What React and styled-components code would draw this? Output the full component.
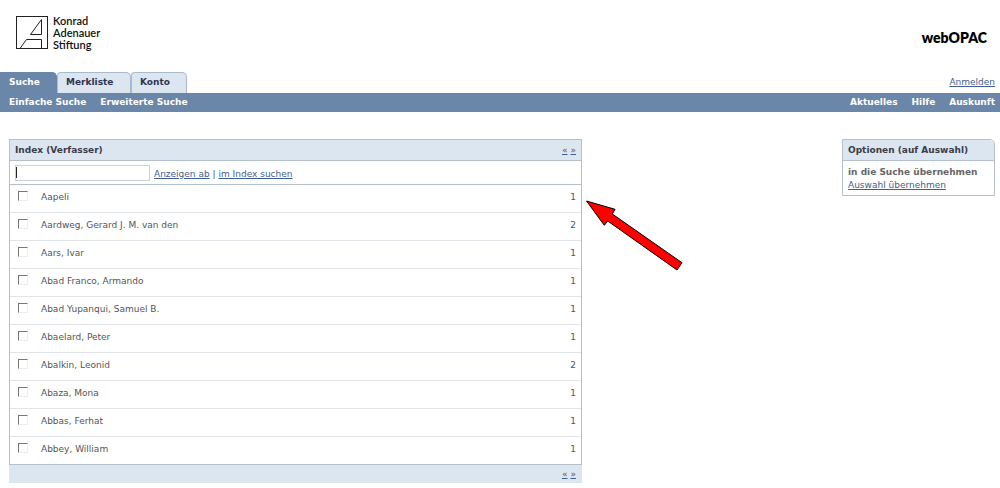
import React, { useState } from 'react';
import styled, { createGlobalStyle } from 'styled-components';

const GlobalStyle = createGlobalStyle`
  * {
    box-sizing: border-box;
  }

  body {
    margin: 0;
    background: #fff;
    color: #555;
    font-family: Verdana, "DejaVu Sans", sans-serif;
    font-size: 9px;
    line-height: 13px;
  }
`;

const Page = styled.div`
  position: relative;
`;

const Header = styled.header`
  display: flex;
  justify-content: space-between;
  align-items: flex-start;
  height: 72px;
  padding: 15px 13px 0 15px;
`;

const Brand = styled.div`
  display: flex;
  gap: 4px;
`;

const BrandName = styled.div`
  color: #111;
  font-family: Lato, "Open Sans", sans-serif;
  font-size: 11px;
  font-weight: 600;
  line-height: 12px;
`;

const ProductName = styled.div`
  padding-top: 13px;
  color: #000;
  font-family: Lato, "Open Sans", sans-serif;
  font-size: 14px;
  font-weight: 800;
  line-height: 20px;
`;

const TabBar = styled.div`
  display: flex;
  justify-content: space-between;
  align-items: flex-end;
  padding-right: 5px;
`;

const Tabs = styled.nav`
  display: flex;
`;

const Tab = styled.a`
  width: ${props => props.$width}px;
  height: 21px;
  padding: 3px 8px;
  border: 1px solid ${props => props.$active ? '#6a86a8' : '#a9bacd'};
  border-bottom: none;
  border-radius: ${props => props.$active ? '0 5px 0 0' : '4px 5px 0 0'};
  background: ${props => props.$active ? '#6a86a8' : '#dce6f1'};
  color: ${props => props.$active ? '#fff' : '#2f3550'};
  font-weight: 700;
  text-decoration: none;
`;

const Link = styled.a`
  color: #3f6090;
  text-decoration: underline;
`;

const LoginLink = styled(Link)`
  padding-bottom: 4px;
`;

const SubNav = styled.nav`
  display: flex;
  justify-content: space-between;
  height: 19px;
  padding: 3px 5px 0 9px;
  background: #6a86a8;
`;

const SubNavGroup = styled.div`
  display: flex;
  gap: 14px;
`;

const SubNavLink = styled.a`
  color: #fff;
  font-weight: 700;
  text-decoration: none;
`;

const Main = styled.main`
  display: flex;
  align-items: flex-start;
  gap: 260px;
  padding: 27px 5px 0 9px;
`;

const IndexColumn = styled.section`
  flex: 1;
  min-width: 0;
`;

const Panel = styled.div`
  border: 1px solid #b4c0cc;
  border-radius: ${props => props.$rounded ? '0 5px 0 0' : 0};
  overflow: hidden;
`;

const PanelHeader = styled.div`
  display: flex;
  justify-content: space-between;
  height: 21px;
  padding: 4px 5px 0;
  border-bottom: 1px solid #b4c0cc;
  background: #dce6f0;
`;

const PanelTitle = styled.h2`
  margin: 0;
  color: #3c3c48;
  font-size: 9px;
  font-weight: 700;
  line-height: 13px;
`;

const Pager = styled.div`
  display: flex;
  gap: 3px;
`;

const SearchForm = styled.form`
  display: flex;
  align-items: center;
  gap: 4px;
  height: 24px;
  padding: 0 5px;
  border-bottom: 1px solid #b4c0cc;
`;

const SearchInput = styled.input`
  width: 135px;
  height: 16px;
  padding: 0 2px;
  border: 1px solid #d0d0d0;
  background: ${props => props.$empty
    ? 'linear-gradient(#222, #222) 0 1px / 1px 11px no-repeat #fff'
    : '#fff'};
  color: #333;
  caret-color: ${props => props.$empty ? 'transparent' : 'auto'};
  font: inherit;
  outline: none;
`;

const SearchLinks = styled.div`
  padding-top: 4px;
`;

const IndexTable = styled.table`
  width: 100%;
  border-collapse: collapse;
`;

const Row = styled.tr`
  & + & {
    border-top: 1px solid #e0e4e8;
  }
`;

const CheckCell = styled.td`
  width: 31px;
  padding: 6px 8px 0;
  vertical-align: top;
`;

const Checkbox = styled.input.attrs({
  type: 'checkbox'
})`
  display: block;
  width: 10px;
  height: 10px;
  margin: 0;
  appearance: none;
  border: 1px solid #eee;
  border-top-color: #777;
  border-left-color: #777;
  background: #fff;

  &:checked {
    background: #6a86a8;
  }
`;

const NameCell = styled.td`
  padding: 6px 0 8px;
`;

const CountCell = styled.td`
  width: 40px;
  padding: 6px 5px 8px 0;
  text-align: right;
`;

const IndexFooter = styled.div`
  display: flex;
  justify-content: flex-end;
  height: 18px;
  padding: 3px 6px 0;
  background: #dce6f0;
`;

const OptionsColumn = styled.aside`
  flex: none;
  width: 153px;
`;

const OptionsBody = styled.div`
  padding: 5px 5px 3px;
`;

const OptionsLabel = styled.div`
  color: #666;
  font-weight: 700;
`;

const Pointer = styled.svg`
  position: absolute;
  top: 199px;
  left: calc(100% - 415px);
  pointer-events: none;
`;

const entries = [
  { name: 'Aapeli', count: 1 },
  { name: 'Aardweg, Gerard J. M. van den', count: 2 },
  { name: 'Aars, Ivar', count: 1 },
  { name: 'Abad Franco, Armando', count: 1 },
  { name: 'Abad Yupanqui, Samuel B.', count: 1 },
  { name: 'Abaelard, Peter', count: 1 },
  { name: 'Abalkin, Leonid', count: 2 },
  { name: 'Abaza, Mona', count: 1 },
  { name: 'Abbas, Ferhat', count: 1 },
  { name: 'Abbey, William', count: 1 },
];

const Logo = () => (
  <svg width="34" height="35" viewBox="0 0 34 35" fill="none" stroke="#222" strokeWidth="1">
    <rect x="1.5" y="1.5" width="31" height="32" />
    <path d="M5 33.5 L11.5 24.5 H26.5 V33.5" />
    <path d="M15.5 19.5 L26.5 4.5 V19.5 Z" />
  </svg>
);

const PagerLinks = () => (
  <Pager>
    <Link href="#prev" aria-label="Zurück">«</Link>
    <Link href="#next" aria-label="Weiter">»</Link>
  </Pager>
);

const App = () => {
  const [query, setQuery] = useState('');

  return (
    <Page>
      <GlobalStyle />
      <Header>
        <Brand>
          <Logo />
          <BrandName>Konrad<br />Adenauer<br />Stiftung</BrandName>
        </Brand>
        <ProductName>webOPAC</ProductName>
      </Header>

      <TabBar>
        <Tabs>
          <Tab href="#suche" $active $width={57}>Suche</Tab>
          <Tab href="#merkliste" $width={74}>Merkliste</Tab>
          <Tab href="#konto" $width={56}>Konto</Tab>
        </Tabs>
        <LoginLink href="#anmelden">Anmelden</LoginLink>
      </TabBar>
      <SubNav>
        <SubNavGroup>
          <SubNavLink href="#einfach">Einfache Suche</SubNavLink>
          <SubNavLink href="#erweitert">Erweiterte Suche</SubNavLink>
        </SubNavGroup>
        <SubNavGroup>
          <SubNavLink href="#aktuelles">Aktuelles</SubNavLink>
          <SubNavLink href="#hilfe">Hilfe</SubNavLink>
          <SubNavLink href="#auskunft">Auskunft</SubNavLink>
        </SubNavGroup>
      </SubNav>

      <Main>
        <IndexColumn>
          <Panel>
            <PanelHeader>
              <PanelTitle>Index (Verfasser)</PanelTitle>
              <PagerLinks />
            </PanelHeader>
            <SearchForm onSubmit={e => e.preventDefault()}>
              <SearchInput
                type="text"
                aria-label="Verfasser"
                autoFocus
                $empty={query === ''}
                value={query}
                onChange={e => setQuery(e.target.value)}
              />
              <SearchLinks>
                <Link href="#anzeigen">Anzeigen ab</Link> | <Link href="#index">im Index suchen</Link>
              </SearchLinks>
            </SearchForm>
            <IndexTable>
              <tbody>
                {entries.map((entry, i) => (
                  <Row key={entry.name}>
                    <CheckCell>
                      <Checkbox id={`entry-${i}`} />
                    </CheckCell>
                    <NameCell>
                      <label htmlFor={`entry-${i}`}>{entry.name}</label>
                    </NameCell>
                    <CountCell>{entry.count}</CountCell>
                  </Row>
                ))}
              </tbody>
            </IndexTable>
          </Panel>
          <IndexFooter>
            <PagerLinks />
          </IndexFooter>
        </IndexColumn>

        <OptionsColumn>
          <Panel $rounded>
            <PanelHeader>
              <PanelTitle>Optionen (auf Auswahl)</PanelTitle>
            </PanelHeader>
            <OptionsBody>
              <OptionsLabel>in die Suche übernehmen</OptionsLabel>
              <Link href="#auswahl">Auswahl übernehmen</Link>
            </OptionsBody>
          </Panel>
        </OptionsColumn>
      </Main>

      <Pointer width="99" height="73" viewBox="585 199 99 73">
        <path
          d="M586.5 201 L615 209.3 L612.3 214 L682 262.7 L677 270 L607.7 221 L604.3 225.3 Z"
          fill="#f00"
          stroke="#000"
          strokeWidth="1"
        />
      </Pointer>
    </Page>
  );
};

export default App;
